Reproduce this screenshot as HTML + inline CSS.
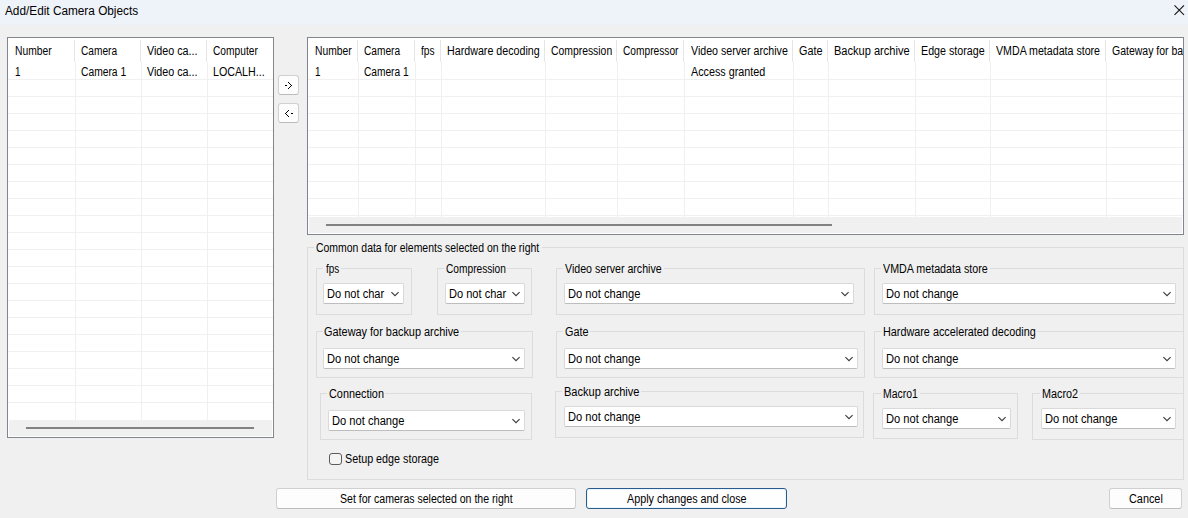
<!DOCTYPE html>
<html><head><meta charset="utf-8"><title>Add/Edit Camera Objects</title><style>
*{margin:0;padding:0;box-sizing:border-box}
html,body{width:1188px;height:518px;overflow:hidden;background:#f0f0f0;font-family:"Liberation Sans",sans-serif;color:#000}
body{position:relative}
.a{position:absolute}
.t{position:absolute;white-space:nowrap;line-height:14px;transform-origin:0 0;color:#000}
.g{position:absolute;background:#f0f0f0}
.grp{position:absolute;border:1px solid #dcdcdc}
.gap{position:absolute;background:#f0f0f0;height:3px}
.cb{position:absolute;background:#fff;border:1px solid #d9d9d9;border-bottom-color:#bdbdbd;border-radius:2px}
.btn{position:absolute;background:#fdfdfd;border:1px solid #d0d0d0;border-bottom-color:#bcbcbc;border-radius:3px}
</style></head>
<body>
<div class="a" style="left:0;top:0;width:1188px;height:25px;background:#eef2f9"></div>
<div class="a" style="left:0;top:24px;width:1188px;height:1px;background:#eef1f7"></div>
<div class="a" style="left:0;top:25px;width:1188px;height:1px;background:#eff0f4"></div>
<div class="a" style="left:0;top:26px;width:1188px;height:1px;background:#f0f0f1"></div>
<svg class="a" style="left:1173px;top:4px" width="13" height="13" viewBox="0 0 13 13"><path d="M1.5 1.3L11 10.8M11 1.3L1.5 10.8" stroke="#1b1b1b" stroke-width="1.15"/></svg>
<div class="a" style="left:7px;top:37px;width:267px;height:401px;background:#fff;border:1px solid #80858e"></div>
<div class="g" style="left:8px;top:79px;width:265px;height:1px"></div>
<div class="g" style="left:8px;top:96px;width:265px;height:1px"></div>
<div class="g" style="left:8px;top:113px;width:265px;height:1px"></div>
<div class="g" style="left:8px;top:130px;width:265px;height:1px"></div>
<div class="g" style="left:8px;top:147px;width:265px;height:1px"></div>
<div class="g" style="left:8px;top:164px;width:265px;height:1px"></div>
<div class="g" style="left:8px;top:181px;width:265px;height:1px"></div>
<div class="g" style="left:8px;top:198px;width:265px;height:1px"></div>
<div class="g" style="left:8px;top:215px;width:265px;height:1px"></div>
<div class="g" style="left:8px;top:232px;width:265px;height:1px"></div>
<div class="g" style="left:8px;top:249px;width:265px;height:1px"></div>
<div class="g" style="left:8px;top:266px;width:265px;height:1px"></div>
<div class="g" style="left:8px;top:283px;width:265px;height:1px"></div>
<div class="g" style="left:8px;top:300px;width:265px;height:1px"></div>
<div class="g" style="left:8px;top:317px;width:265px;height:1px"></div>
<div class="g" style="left:8px;top:334px;width:265px;height:1px"></div>
<div class="g" style="left:8px;top:351px;width:265px;height:1px"></div>
<div class="g" style="left:8px;top:368px;width:265px;height:1px"></div>
<div class="g" style="left:8px;top:385px;width:265px;height:1px"></div>
<div class="g" style="left:8px;top:402px;width:265px;height:1px"></div>
<div class="a" style="left:74px;top:40px;width:1px;height:22px;background:#e5e5e5"></div>
<div class="g" style="left:75px;top:62px;width:1px;height:358px"></div>
<div class="a" style="left:140px;top:40px;width:1px;height:22px;background:#e5e5e5"></div>
<div class="g" style="left:141px;top:62px;width:1px;height:358px"></div>
<div class="a" style="left:206px;top:40px;width:1px;height:22px;background:#e5e5e5"></div>
<div class="g" style="left:207px;top:62px;width:1px;height:358px"></div>
<div class="a" style="left:9px;top:420px;width:263px;height:16px;background:#f0f0f0"></div>
<div class="a" style="left:26px;top:427px;width:228px;height:2px;background:#828282"></div>
<div class="a" style="left:307px;top:37px;width:877px;height:198px;background:#fff;border:1px solid #80858e"></div>
<div class="g" style="left:308px;top:79px;width:875px;height:1px"></div>
<div class="g" style="left:308px;top:96px;width:875px;height:1px"></div>
<div class="g" style="left:308px;top:113px;width:875px;height:1px"></div>
<div class="g" style="left:308px;top:130px;width:875px;height:1px"></div>
<div class="g" style="left:308px;top:147px;width:875px;height:1px"></div>
<div class="g" style="left:308px;top:164px;width:875px;height:1px"></div>
<div class="g" style="left:308px;top:181px;width:875px;height:1px"></div>
<div class="g" style="left:308px;top:198px;width:875px;height:1px"></div>
<div class="g" style="left:308px;top:215px;width:875px;height:1px"></div>
<div class="a" style="left:357px;top:40px;width:1px;height:22px;background:#e5e5e5"></div>
<div class="g" style="left:358px;top:62px;width:1px;height:155px"></div>
<div class="a" style="left:414px;top:40px;width:1px;height:22px;background:#e5e5e5"></div>
<div class="g" style="left:415px;top:62px;width:1px;height:155px"></div>
<div class="a" style="left:440px;top:40px;width:1px;height:22px;background:#e5e5e5"></div>
<div class="g" style="left:441px;top:62px;width:1px;height:155px"></div>
<div class="a" style="left:544px;top:40px;width:1px;height:22px;background:#e5e5e5"></div>
<div class="g" style="left:545px;top:62px;width:1px;height:155px"></div>
<div class="a" style="left:616px;top:40px;width:1px;height:22px;background:#e5e5e5"></div>
<div class="g" style="left:617px;top:62px;width:1px;height:155px"></div>
<div class="a" style="left:683px;top:40px;width:1px;height:22px;background:#e5e5e5"></div>
<div class="g" style="left:684px;top:62px;width:1px;height:155px"></div>
<div class="a" style="left:792px;top:40px;width:1px;height:22px;background:#e5e5e5"></div>
<div class="g" style="left:793px;top:62px;width:1px;height:155px"></div>
<div class="a" style="left:827px;top:40px;width:1px;height:22px;background:#e5e5e5"></div>
<div class="g" style="left:828px;top:62px;width:1px;height:155px"></div>
<div class="a" style="left:914px;top:40px;width:1px;height:22px;background:#e5e5e5"></div>
<div class="g" style="left:915px;top:62px;width:1px;height:155px"></div>
<div class="a" style="left:989px;top:40px;width:1px;height:22px;background:#e5e5e5"></div>
<div class="g" style="left:990px;top:62px;width:1px;height:155px"></div>
<div class="a" style="left:1105px;top:40px;width:1px;height:22px;background:#e5e5e5"></div>
<div class="g" style="left:1106px;top:62px;width:1px;height:155px"></div>
<div class="a" style="left:309px;top:217px;width:873px;height:16px;background:#f0f0f0"></div>
<div class="a" style="left:326px;top:224px;width:506px;height:2px;background:#828282"></div>
<div class="btn" style="left:278px;top:75px;width:21px;height:20px"></div>
<div class="btn" style="left:278px;top:103px;width:21px;height:20px"></div>
<div class="a" style="left:285px;top:85px;width:1px;height:1px;background:#000"></div><div class="a" style="left:286px;top:85px;width:1px;height:1px;background:#000"></div><div class="a" style="left:288px;top:82px;width:1px;height:1px;background:#000"></div><div class="a" style="left:289px;top:83px;width:1px;height:1px;background:#000"></div><div class="a" style="left:290px;top:84px;width:1px;height:1px;background:#000"></div><div class="a" style="left:291px;top:85px;width:1px;height:1px;background:#000"></div><div class="a" style="left:290px;top:86px;width:1px;height:1px;background:#000"></div><div class="a" style="left:289px;top:87px;width:1px;height:1px;background:#000"></div><div class="a" style="left:288px;top:88px;width:1px;height:1px;background:#000"></div>
<div class="a" style="left:291px;top:113px;width:1px;height:1px;background:#000"></div><div class="a" style="left:292px;top:113px;width:1px;height:1px;background:#000"></div><div class="a" style="left:288px;top:110px;width:1px;height:1px;background:#000"></div><div class="a" style="left:287px;top:111px;width:1px;height:1px;background:#000"></div><div class="a" style="left:286px;top:112px;width:1px;height:1px;background:#000"></div><div class="a" style="left:285px;top:113px;width:1px;height:1px;background:#000"></div><div class="a" style="left:286px;top:114px;width:1px;height:1px;background:#000"></div><div class="a" style="left:287px;top:115px;width:1px;height:1px;background:#000"></div><div class="a" style="left:288px;top:116px;width:1px;height:1px;background:#000"></div>
<div class="grp" style="left:307px;top:247px;width:877px;height:233px"></div>
<div class="gap" style="left:314px;top:246px;width:228px"></div>
<div class="grp" style="left:316px;top:268px;width:96px;height:47px"></div>
<div class="gap" style="left:323px;top:267px;width:18px"></div>
<div class="grp" style="left:437px;top:268px;width:95px;height:47px"></div>
<div class="gap" style="left:444px;top:267px;width:63px"></div>
<div class="grp" style="left:556px;top:268px;width:309px;height:47px"></div>
<div class="gap" style="left:563px;top:267px;width:101px"></div>
<div class="grp" style="left:874px;top:268px;width:310px;height:47px"></div>
<div class="gap" style="left:881px;top:267px;width:109px"></div>
<div class="grp" style="left:316px;top:331px;width:217px;height:47px"></div>
<div class="gap" style="left:323px;top:330px;width:138px"></div>
<div class="grp" style="left:556px;top:331px;width:309px;height:47px"></div>
<div class="gap" style="left:563px;top:330px;width:27px"></div>
<div class="grp" style="left:874px;top:331px;width:310px;height:47px"></div>
<div class="gap" style="left:881px;top:330px;width:156px"></div>
<div class="grp" style="left:320px;top:393px;width:212px;height:47px"></div>
<div class="gap" style="left:327px;top:392px;width:58px"></div>
<div class="grp" style="left:555px;top:391px;width:309px;height:47px"></div>
<div class="gap" style="left:562px;top:390px;width:79px"></div>
<div class="grp" style="left:873px;top:393px;width:145px;height:46px"></div>
<div class="gap" style="left:881px;top:392px;width:39px"></div>
<div class="grp" style="left:1032px;top:393px;width:152px;height:47px"></div>
<div class="gap" style="left:1040px;top:392px;width:40px"></div>
<div class="cb" style="left:323px;top:283px;width:81px;height:21px"></div>
<svg class="a" style="left:390px;top:291px" width="11" height="7" viewBox="0 0 11 7"><path d="M1.4 1.1L5 4.7L8.6 1.1" fill="none" stroke="#3a3a3a" stroke-width="1.1"/></svg>
<div class="cb" style="left:445px;top:283px;width:80px;height:21px"></div>
<svg class="a" style="left:511px;top:291px" width="11" height="7" viewBox="0 0 11 7"><path d="M1.4 1.1L5 4.7L8.6 1.1" fill="none" stroke="#3a3a3a" stroke-width="1.1"/></svg>
<div class="cb" style="left:564px;top:283px;width:290px;height:21px"></div>
<svg class="a" style="left:840px;top:291px" width="11" height="7" viewBox="0 0 11 7"><path d="M1.4 1.1L5 4.7L8.6 1.1" fill="none" stroke="#3a3a3a" stroke-width="1.1"/></svg>
<div class="cb" style="left:882px;top:283px;width:294px;height:21px"></div>
<svg class="a" style="left:1162px;top:291px" width="11" height="7" viewBox="0 0 11 7"><path d="M1.4 1.1L5 4.7L8.6 1.1" fill="none" stroke="#3a3a3a" stroke-width="1.1"/></svg>
<div class="cb" style="left:323px;top:348px;width:202px;height:21px"></div>
<svg class="a" style="left:511px;top:356px" width="11" height="7" viewBox="0 0 11 7"><path d="M1.4 1.1L5 4.7L8.6 1.1" fill="none" stroke="#3a3a3a" stroke-width="1.1"/></svg>
<div class="cb" style="left:564px;top:348px;width:294px;height:21px"></div>
<svg class="a" style="left:844px;top:356px" width="11" height="7" viewBox="0 0 11 7"><path d="M1.4 1.1L5 4.7L8.6 1.1" fill="none" stroke="#3a3a3a" stroke-width="1.1"/></svg>
<div class="cb" style="left:882px;top:348px;width:294px;height:21px"></div>
<svg class="a" style="left:1162px;top:356px" width="11" height="7" viewBox="0 0 11 7"><path d="M1.4 1.1L5 4.7L8.6 1.1" fill="none" stroke="#3a3a3a" stroke-width="1.1"/></svg>
<div class="cb" style="left:328px;top:410px;width:197px;height:21px"></div>
<svg class="a" style="left:511px;top:418px" width="11" height="7" viewBox="0 0 11 7"><path d="M1.4 1.1L5 4.7L8.6 1.1" fill="none" stroke="#3a3a3a" stroke-width="1.1"/></svg>
<div class="cb" style="left:564px;top:406px;width:294px;height:21px"></div>
<svg class="a" style="left:844px;top:414px" width="11" height="7" viewBox="0 0 11 7"><path d="M1.4 1.1L5 4.7L8.6 1.1" fill="none" stroke="#3a3a3a" stroke-width="1.1"/></svg>
<div class="cb" style="left:882px;top:408px;width:129px;height:21px"></div>
<svg class="a" style="left:997px;top:416px" width="11" height="7" viewBox="0 0 11 7"><path d="M1.4 1.1L5 4.7L8.6 1.1" fill="none" stroke="#3a3a3a" stroke-width="1.1"/></svg>
<div class="cb" style="left:1041px;top:408px;width:135px;height:21px"></div>
<svg class="a" style="left:1162px;top:416px" width="11" height="7" viewBox="0 0 11 7"><path d="M1.4 1.1L5 4.7L8.6 1.1" fill="none" stroke="#3a3a3a" stroke-width="1.1"/></svg>
<div class="a" style="left:329px;top:453px;width:13px;height:12px;border:1px solid #5c5c5c;border-radius:3px;background:#f4f4f4"></div>
<div class="btn" style="left:276px;top:488px;width:300px;height:21px"></div>
<div class="btn" style="left:586px;top:488px;width:201px;height:21px;border:1px solid #2a5b8c;border-radius:3px;background:#fefefe;box-shadow:inset 0 0 0 1px #e8f7fd"></div>
<div class="btn" style="left:1109px;top:488px;width:73px;height:21px"></div>
<div class="t" style="left:5.20px;top:4px;font-size:12.5px;transform:scaleX(0.9440)">Add/Edit Camera Objects</div>
<div class="t" style="left:14.84px;top:44px;font-size:12px;transform:scaleX(0.8595)">Number</div>
<div class="t" style="left:80.75px;top:44px;font-size:12px;transform:scaleX(0.8452)">Camera</div>
<div class="t" style="left:147.40px;top:44px;font-size:12px;transform:scaleX(0.8946)">Video ca...</div>
<div class="t" style="left:212.85px;top:44px;font-size:12px;transform:scaleX(0.8500)">Computer</div>
<div class="t" style="left:14.88px;top:65px;font-size:12px;transform:scaleX(0.8200)">1</div>
<div class="t" style="left:80.74px;top:65px;font-size:12px;transform:scaleX(0.8569)">Camera 1</div>
<div class="t" style="left:147.40px;top:65px;font-size:12px;transform:scaleX(0.8946)">Video ca...</div>
<div class="t" style="left:212.81px;top:65px;font-size:12px;transform:scaleX(0.8893)">LOCALH...</div>
<div class="t" style="left:314.84px;top:44px;font-size:12px;transform:scaleX(0.8595)">Number</div>
<div class="t" style="left:363.75px;top:44px;font-size:12px;transform:scaleX(0.8452)">Camera</div>
<div class="t" style="left:421.40px;top:44px;font-size:12px;transform:scaleX(0.8500)">fps</div>
<div class="t" style="left:446.51px;top:44px;font-size:12px;transform:scaleX(0.8913)">Hardware decoding</div>
<div class="t" style="left:550.53px;top:44px;font-size:12px;transform:scaleX(0.8652)">Compression</div>
<div class="t" style="left:622.75px;top:44px;font-size:12px;transform:scaleX(0.8484)">Compressor</div>
<div class="t" style="left:690.60px;top:44px;font-size:12px;transform:scaleX(0.8872)">Video server archive</div>
<div class="t" style="left:798.80px;top:44px;font-size:12px;transform:scaleX(0.9000)">Gate</div>
<div class="t" style="left:833.78px;top:44px;font-size:12px;transform:scaleX(0.9210)">Backup archive</div>
<div class="t" style="left:920.81px;top:44px;font-size:12px;transform:scaleX(0.8914)">Edge storage</div>
<div class="t" style="left:996.10px;top:44px;font-size:12px;transform:scaleX(0.8863)">VMDA metadata store</div>
<div class="a" style="left:1110px;top:44px;width:73px;height:14px;overflow:hidden"><div class="t" style="left:1.92px;top:0;font-size:12px;transform:scaleX(0.8750)">Gateway for backup archive</div></div>
<div class="t" style="left:314.88px;top:65px;font-size:12px;transform:scaleX(0.8200)">1</div>
<div class="t" style="left:363.75px;top:65px;font-size:12px;transform:scaleX(0.8471)">Camera 1</div>
<div class="t" style="left:690.60px;top:65px;font-size:12px;transform:scaleX(0.8988)">Access granted</div>
<div class="t" style="left:315.93px;top:241px;font-size:12px;transform:scaleX(0.8714)">Common data for elements selected on the right</div>
<div class="t" style="left:325.80px;top:262px;font-size:12px;transform:scaleX(0.8250)">fps</div>
<div class="t" style="left:445.95px;top:262px;font-size:12px;transform:scaleX(0.8478)">Compression</div>
<div class="t" style="left:565.40px;top:262px;font-size:12px;transform:scaleX(0.8853)">Video server archive</div>
<div class="t" style="left:883.10px;top:262px;font-size:12px;transform:scaleX(0.8923)">VMDA metadata store</div>
<div class="t" style="left:324.49px;top:325px;font-size:12px;transform:scaleX(0.9088)">Gateway for backup archive</div>
<div class="t" style="left:564.60px;top:325px;font-size:12px;transform:scaleX(0.9000)">Gate</div>
<div class="t" style="left:882.80px;top:325px;font-size:12px;transform:scaleX(0.9012)">Hardware accelerated decoding</div>
<div class="t" style="left:328.79px;top:387px;font-size:12px;transform:scaleX(0.9051)">Connection</div>
<div class="t" style="left:563.78px;top:385px;font-size:12px;transform:scaleX(0.9198)">Backup archive</div>
<div class="t" style="left:882.93px;top:387px;font-size:12px;transform:scaleX(0.8692)">Macro1</div>
<div class="t" style="left:1041.80px;top:387px;font-size:12px;transform:scaleX(0.9026)">Macro2</div>
<div class="t" style="left:326.88px;top:287px;font-size:12px;transform:scaleX(0.9213)">Do not char</div>
<div class="t" style="left:448.88px;top:287px;font-size:12px;transform:scaleX(0.9213)">Do not char</div>
<div class="t" style="left:567.87px;top:287px;font-size:12px;transform:scaleX(0.9273)">Do not change</div>
<div class="t" style="left:885.87px;top:287px;font-size:12px;transform:scaleX(0.9273)">Do not change</div>
<div class="t" style="left:326.87px;top:352px;font-size:12px;transform:scaleX(0.9273)">Do not change</div>
<div class="t" style="left:567.87px;top:352px;font-size:12px;transform:scaleX(0.9273)">Do not change</div>
<div class="t" style="left:885.87px;top:352px;font-size:12px;transform:scaleX(0.9273)">Do not change</div>
<div class="t" style="left:331.87px;top:414px;font-size:12px;transform:scaleX(0.9273)">Do not change</div>
<div class="t" style="left:567.87px;top:410px;font-size:12px;transform:scaleX(0.9273)">Do not change</div>
<div class="t" style="left:885.87px;top:412px;font-size:12px;transform:scaleX(0.9273)">Do not change</div>
<div class="t" style="left:1044.87px;top:412px;font-size:12px;transform:scaleX(0.9273)">Do not change</div>
<div class="t" style="left:344.80px;top:452px;font-size:12px;transform:scaleX(0.8971)">Setup edge storage</div>
<div class="t" style="left:339.72px;top:492px;font-size:12px;transform:scaleX(0.8800)">Set for cameras selected on the right</div>
<div class="t" style="left:626.80px;top:492px;font-size:12px;transform:scaleX(0.8962)">Apply changes and close</div>
<div class="t" style="left:1128.69px;top:492px;font-size:12px;transform:scaleX(0.9056)">Cancel</div>
</body></html>
